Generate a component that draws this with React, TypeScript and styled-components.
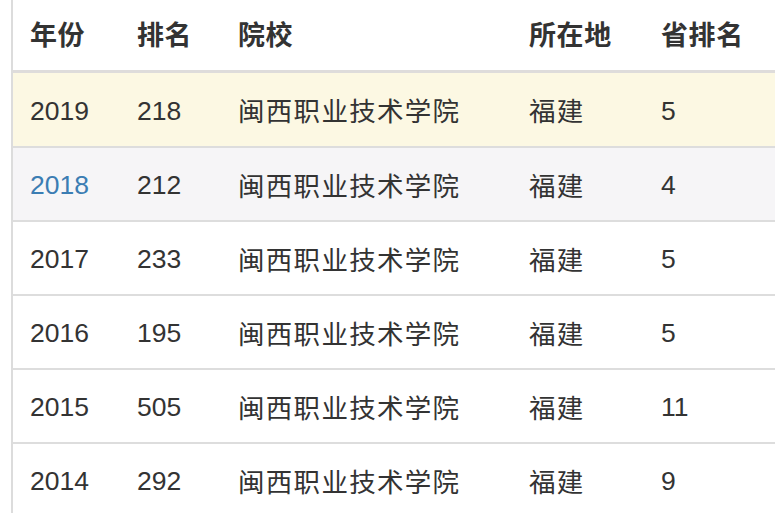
import React from "react";
import styled, { createGlobalStyle } from "styled-components";

const Global = createGlobalStyle`
  html, body { margin: 0; padding: 0; background: #ffffff; }
  body {
    font-family: "Liberation Sans", "Noto Sans CJK SC", sans-serif;
    color: #333333;
    overflow: hidden;
  }
`;

const Page = styled.div`
  width: 775px;
  height: 513px;
  padding-left: 11px;
  box-sizing: border-box;
  overflow: hidden;
`;

const Frame = styled.div`
  border-left: 2px solid #dcdcdc;
  height: 100%;
  display: flex;
  flex-direction: column;
`;

const columns = "107px 101px 291px 132px 1fr";

const HeadRow = styled.div`
  display: grid;
  grid-template-columns: ${columns};
  align-items: center;
  height: 70px;
  border-bottom: 3px solid #dedcdb;
  flex-shrink: 0;
`;

const HeadCell = styled.div`
  padding-left: 17px;
  margin-top: -4px;
  font-size: 27px;
  font-weight: 700;
  letter-spacing: 0.6px;
  color: #333333;
  white-space: nowrap;
`;

type Tone = "warning" | "striped" | "plain";

const Row = styled.div<{ $tone: Tone; $first?: boolean }>`
  display: grid;
  grid-template-columns: ${columns};
  align-items: center;
  height: ${(p) => (p.$first ? 73 : 72)}px;
  flex-shrink: 0;
  border-top: ${(p) => (p.$first ? "none" : "2px solid #dddddd")};
  background: ${(p) =>
    p.$tone === "warning" ? "#fcf8e3" : p.$tone === "striped" ? "#f6f5f7" : "#ffffff"};
`;

const Cell = styled.div<{ $link?: boolean; $cjk?: boolean }>`
  padding-left: 17px;
  padding-top: ${(p) => (p.$cjk ? "0" : "3px")};
  font-size: 26.5px;
  letter-spacing: ${(p) => (p.$cjk ? "1.3px" : "0")};
  color: ${(p) => (p.$link ? "#3b7db3" : "#333333")};
  white-space: nowrap;
`;

const rows = [
  { year: "2019", rank: "218", prov: "5", tone: "warning" as Tone },
  { year: "2018", rank: "212", prov: "4", tone: "striped" as Tone, link: true },
  { year: "2017", rank: "233", prov: "5", tone: "plain" as Tone },
  { year: "2016", rank: "195", prov: "5", tone: "plain" as Tone },
  { year: "2015", rank: "505", prov: "11", tone: "plain" as Tone },
  { year: "2014", rank: "292", prov: "9", tone: "plain" as Tone },
];

export default function App() {
  return (
    <>
      <Global />
      <Page>
        <Frame>
          <HeadRow>
            <HeadCell>年份</HeadCell>
            <HeadCell>排名</HeadCell>
            <HeadCell>院校</HeadCell>
            <HeadCell>所在地</HeadCell>
            <HeadCell>省排名</HeadCell>
          </HeadRow>
          {rows.map((r, i) => (
            <Row key={r.year} $tone={r.tone} $first={i === 0}>
              <Cell $link={r.link}>{r.year}</Cell>
              <Cell>{r.rank}</Cell>
              <Cell $cjk>闽西职业技术学院</Cell>
              <Cell $cjk>福建</Cell>
              <Cell>{r.prov}</Cell>
            </Row>
          ))}
        </Frame>
      </Page>
    </>
  );
}
